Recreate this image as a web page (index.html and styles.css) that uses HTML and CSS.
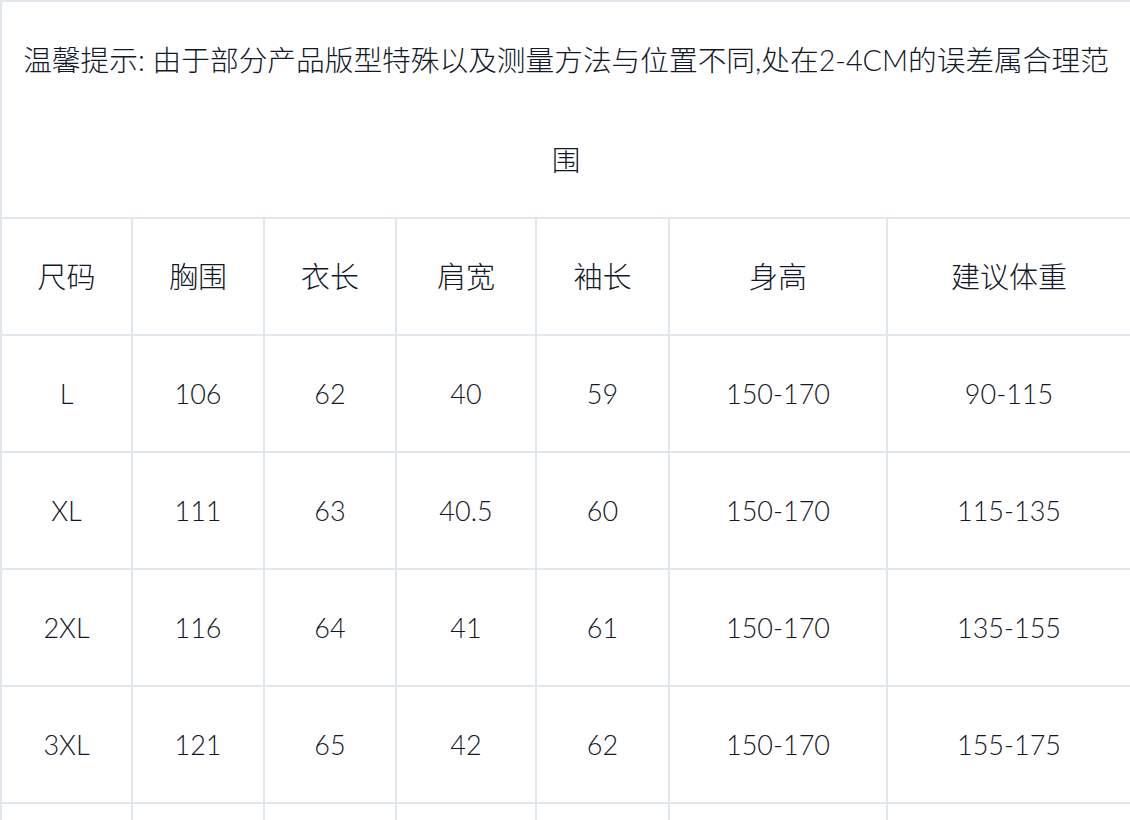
FILE: index.html
```html
<!DOCTYPE html>
<html lang="zh-CN">
<head>
<meta charset="utf-8">
<title>尺码表</title>
<link rel="stylesheet" href="styles.css">
</head>
<body>
<table class="size-table">
  <colgroup>
    <col class="c1"><col class="c2"><col class="c3"><col class="c4"><col class="c5"><col class="c6"><col class="c7">
  </colgroup>
  <tbody>
    <tr><td class="note" colspan="7">温馨提示: 由于部分产品版型特殊以及测量方法与位置不同,处在2-4CM的误差属合理范围</td></tr>
    <tr class="head"><td>尺码</td><td>胸围</td><td>衣长</td><td>肩宽</td><td>袖长</td><td>身高</td><td>建议体重</td></tr>
    <tr><td>L</td><td>106</td><td>62</td><td>40</td><td>59</td><td>150-170</td><td>90-115</td></tr>
    <tr><td>XL</td><td>111</td><td>63</td><td>40.5</td><td>60</td><td>150-170</td><td>115-135</td></tr>
    <tr><td>2XL</td><td>116</td><td>64</td><td>41</td><td>61</td><td>150-170</td><td>135-155</td></tr>
    <tr><td>3XL</td><td>121</td><td>65</td><td>42</td><td>62</td><td>150-170</td><td>155-175</td></tr>
    <tr><td>&nbsp;</td><td>&nbsp;</td><td>&nbsp;</td><td>&nbsp;</td><td>&nbsp;</td><td>&nbsp;</td><td>&nbsp;</td></tr>
  </tbody>
</table>
</body>
</html>
```
FILE: styles.css
```css
html, body {
  margin: 0;
  padding: 0;
  background: #ffffff;
}
body {
  font-family: "Lato", "Noto Sans CJK SC", sans-serif;
  color: #111827;
}
.size-table {
  width: 1130px;
  border-collapse: collapse;
  table-layout: fixed;
}
.c1 { width: 131px; }
.c2 { width: 132px; }
.c3 { width: 132px; }
.c4 { width: 140px; }
.c5 { width: 133px; }
.c6 { width: 218px; }
.c7 { width: 244px; }
.size-table td {
  border: 2px solid #e1e7ef;
  padding: 8px 8px 7px;
  text-align: center;
  font-size: 27px;
  line-height: 100px;
  font-weight: 300;
}
.size-table td.note {
  padding: 8px 8px 7px;
  font-size: 28.7px;
}
.size-table .head td {
  font-size: 29px;
}
```
